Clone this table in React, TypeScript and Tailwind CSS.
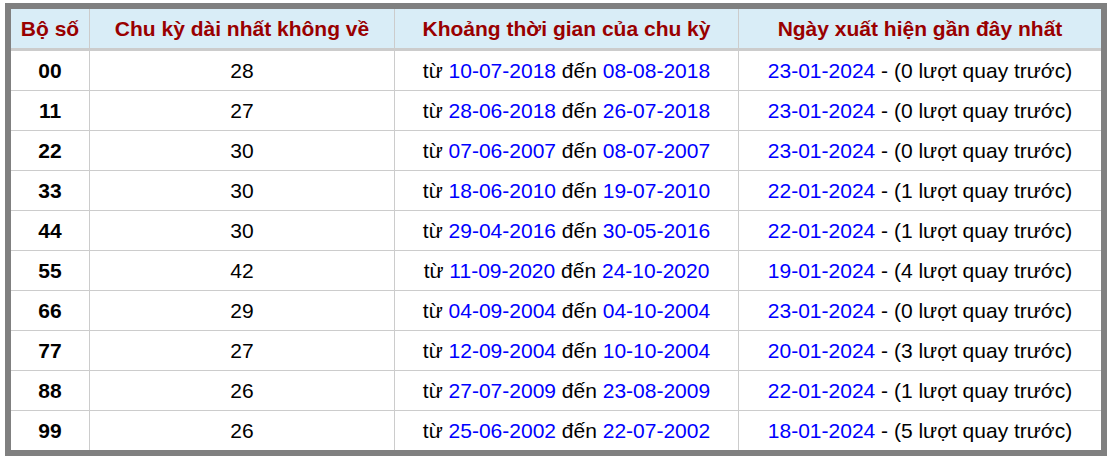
import React from "react";

const rows = [
  ["00", "28", "10-07-2018", "08-08-2018", "23-01-2024", "0"],
  ["11", "27", "28-06-2018", "26-07-2018", "23-01-2024", "0"],
  ["22", "30", "07-06-2007", "08-07-2007", "23-01-2024", "0"],
  ["33", "30", "18-06-2010", "19-07-2010", "22-01-2024", "1"],
  ["44", "30", "29-04-2016", "30-05-2016", "22-01-2024", "1"],
  ["55", "42", "11-09-2020", "24-10-2020", "19-01-2024", "4"],
  ["66", "29", "04-09-2004", "04-10-2004", "23-01-2024", "0"],
  ["77", "27", "12-09-2004", "10-10-2004", "20-01-2024", "3"],
  ["88", "26", "27-07-2009", "23-08-2009", "22-01-2024", "1"],
  ["99", "26", "25-06-2002", "22-07-2002", "18-01-2024", "5"],
];

export default function App() {
  return (
    <div
      className="bg-white w-[1110px] h-[459px] pt-[3px] pl-[5px]"
      style={{ fontFamily: '"Liberation Sans", Arial, sans-serif' }}
    >
      <div className="w-[1102px] border-[6px] border-[#808080] grid grid-cols-[79px_305px_344px_362px] text-[21px] text-black leading-none">
        {["Bộ số", "Chu kỳ dài nhất không về", "Khoảng thời gian của chu kỳ", "Ngày xuất hiện gần đây nhất"].map((h, i) => (
          <div
            key={h}
            className={
              "h-[42px] bg-[#d9edf7] border-b-[3px] border-[#cccccc] flex items-center justify-center font-bold text-[#990000] whitespace-nowrap " +
              (i < 3 ? "border-r" : "")
            }
          >
            {h}
          </div>
        ))}
        {rows.map((r, ri) => {
          const last = ri === rows.length - 1;
          const base =
            "flex items-center justify-center whitespace-nowrap border-[#cccccc] " +
            (last ? "h-[39px]" : "h-[40px] border-b");
          return (
            <React.Fragment key={r[0]}>
              <div className={base + " border-r font-bold"}>{r[0]}</div>
              <div className={base + " border-r"}>{r[1]}</div>
              <div className={base + " border-r"}>
                từ&nbsp;<span className="text-[#0000ff]">{r[2]}</span>&nbsp;đến&nbsp;
                <span className="text-[#0000ff]">{r[3]}</span>
              </div>
              <div className={base}>
                <span className="text-[#0000ff]">{r[4]}</span>&nbsp;- ({r[5]} lượt quay trước)
              </div>
            </React.Fragment>
          );
        })}
      </div>
    </div>
  );
}
